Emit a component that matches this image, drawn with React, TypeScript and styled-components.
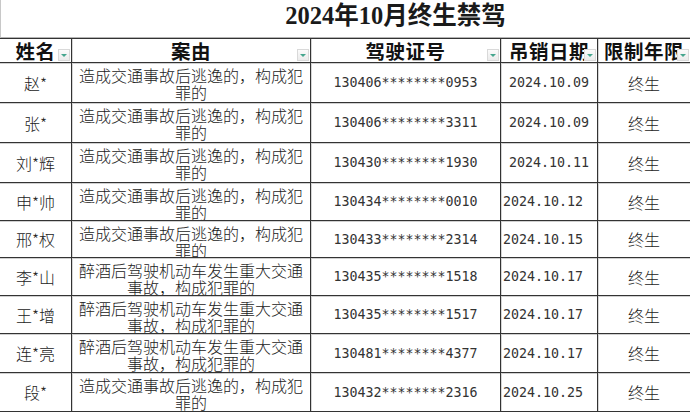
import * as React from 'react';
import styled, { createGlobalStyle } from 'styled-components';

const GlobalStyle = createGlobalStyle`
  html, body {
    margin: 0;
    padding: 0;
    background: #fff;
  }
  body {
    width: 690px;
    height: 412px;
    overflow: hidden;
    font-family: "Noto Sans CJK SC", sans-serif;
  }
`

const Sheet = styled.div`
  width: 690px;
  height: 412px;
  display: flex;
  flex-direction: column;
  background: #fff;
  overflow: hidden;
`

// the merged title cell runs past the right edge, so its text sits right of centre
const TitleBar = styled.div`
  flex: none;
  box-sizing: border-box;
  height: 38px;
  padding: 0 0 6px 100px;
  display: flex;
  align-items: center;
  justify-content: center;
  border-bottom: 1px solid #b4b4b4;
  border-left: 1px solid #c8c8c8;
  font-family: "Liberation Serif", "Noto Sans CJK SC", serif;
  font-weight: 700;
  font-size: 24.5px;
  line-height: 28px;
  color: #1a1a1a;
`

const Row = styled.div<{ $h: number }>`
  flex: none;
  box-sizing: border-box;
  display: grid;
  grid-template-columns: 72px 239px 190px 97px 92px;
  height: ${p => p.$h}px;
  border-bottom: 1px solid #333;
  box-shadow: inset 0 1px 0 #d0d0d0;
`

const HeaderRow = styled(Row)`
  border-top: 1px solid #333;
  box-shadow: none;
`

const Cell = styled.div`
  box-sizing: border-box;
  min-width: 0;
  overflow: hidden;
  border-right: 1px solid #333;
  &:not(:first-child) {
    box-shadow: inset 1px 0 0 #d6d6d6;
  }
  &:last-child {
    border-right: none;
  }
`

const HeadCell = styled(Cell)`
  position: relative;
  overflow: visible;
  display: flex;
  align-items: center;
  justify-content: center;
  white-space: nowrap;
  font-size: 19.5px;
  font-weight: 700;
  line-height: 23px;
  letter-spacing: 0.5px;
  color: #111;
`

const FilterButton = styled.span`
  position: absolute;
  right: 1px;
  bottom: 1px;
  width: 12px;
  height: 12px;
  box-sizing: border-box;
  border: 1px solid #d9d9d9;
  background: linear-gradient(#fbfbfb, #ebebeb);
  display: flex;
  align-items: center;
  justify-content: center;
  &::after {
    content: '';
    display: block;
    border-left: 3px solid transparent;
    border-right: 3px solid transparent;
    border-top: 3px solid #45a68e;
  }
`

const NameCell = styled(Cell)`
  display: flex;
  align-items: center;
  justify-content: center;
  font-size: 16px;
  font-weight: 300;
  color: #222;
`

const ReasonCell = styled(Cell)`
  padding-top: 4px;
  text-align: center;
  font-size: 16px;
  font-weight: 300;
  line-height: 17px;
  color: #222;
`

const MonoCell = styled(Cell)<{ $align?: 'center' | 'left' }>`
  display: flex;
  align-items: center;
  justify-content: ${p => (p.$align === 'left' ? 'flex-start' : 'center')};
  padding-left: ${p => (p.$align === 'left' ? '2px' : '0')};
  white-space: nowrap;
  font-family: "DejaVu Sans Mono", "Liberation Mono", monospace;
  font-size: 13.3px;
  color: #333;
`

const TermCell = styled(NameCell)``

const HIT_RUN = '造成交通事故后逃逸的，构成犯罪的';
const DRUNK = '醉酒后驾驶机动车发生重大交通事故，构成犯罪的';

const headers = ['姓名', '案由', '驾驶证号', '吊销日期', '限制年限'];

const rows = [
  { name: '赵*', reason: HIT_RUN, id: '130406********0953', date: '2024.10.09', align: 'center', h: 40 },
  { name: '张*', reason: HIT_RUN, id: '130406********3311', date: '2024.10.09', align: 'center', h: 40 },
  { name: '刘*辉', reason: HIT_RUN, id: '130430********1930', date: '2024.10.11', align: 'center', h: 40 },
  { name: '申*帅', reason: HIT_RUN, id: '130434********0010', date: '2024.10.12', align: 'left', h: 38 },
  { name: '邢*权', reason: HIT_RUN, id: '130433********2314', date: '2024.10.15', align: 'left', h: 37 },
  { name: '李*山', reason: DRUNK, id: '130435********1518', date: '2024.10.17', align: 'left', h: 38 },
  { name: '王*增', reason: DRUNK, id: '130435********1517', date: '2024.10.17', align: 'left', h: 38 },
  { name: '连*亮', reason: DRUNK, id: '130481********4377', date: '2024.10.17', align: 'left', h: 39 },
  { name: '段*', reason: HIT_RUN, id: '130432********2316', date: '2024.10.25', align: 'left', h: 39 },
] as const;

export default function App() {
  return (
    <>
      <GlobalStyle />
      <Sheet>
        <TitleBar>2024年10月终生禁驾</TitleBar>
        <HeaderRow $h={25}>
          {headers.map(h => (
            <HeadCell key={h}>
              {h}
              <FilterButton />
            </HeadCell>
          ))}
        </HeaderRow>
        {rows.map(r => (
          <Row key={r.id + r.name} $h={r.h}>
            <NameCell>{r.name}</NameCell>
            <ReasonCell>{r.reason}</ReasonCell>
            <MonoCell>{r.id}</MonoCell>
            <MonoCell $align={r.align}>{r.date}</MonoCell>
            <TermCell>终生</TermCell>
          </Row>
        ))}
      </Sheet>
    </>
  );
}
